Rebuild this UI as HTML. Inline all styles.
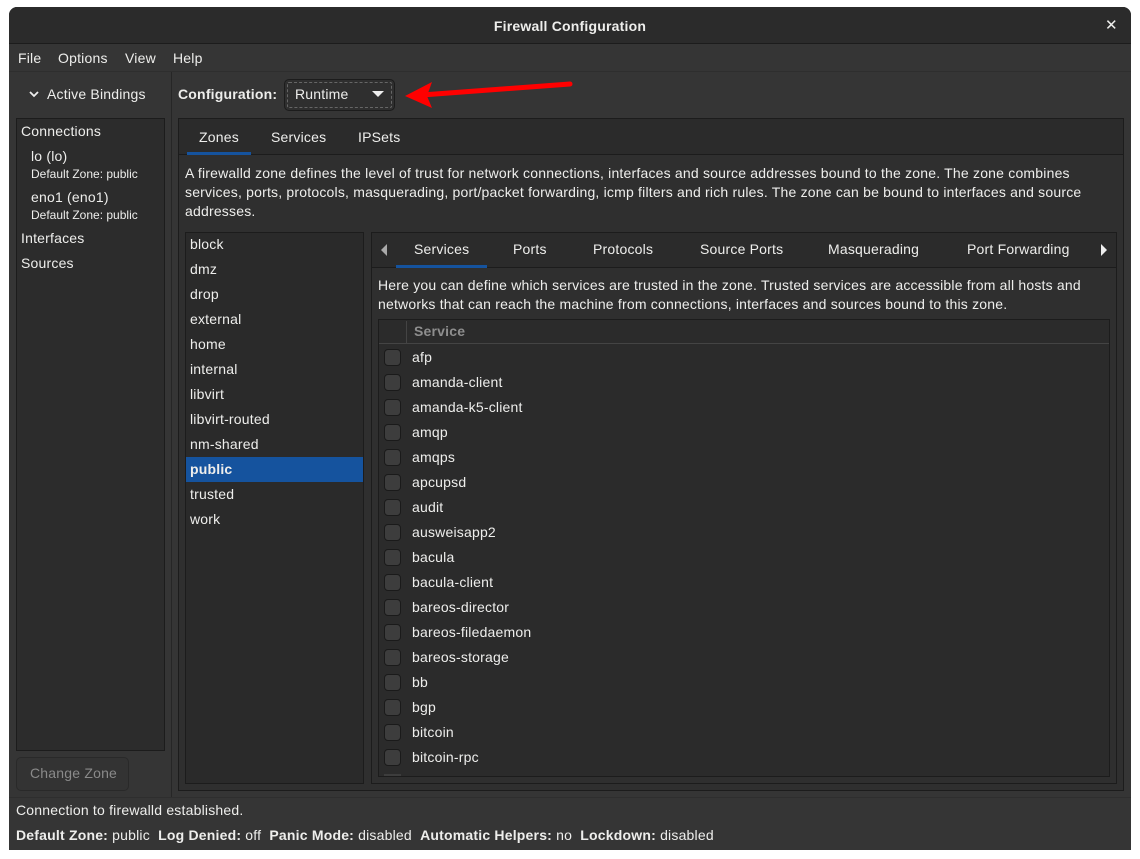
<!DOCTYPE html>
<html><head><meta charset="utf-8"><style>
*{margin:0;padding:0;box-sizing:border-box}
body{width:1140px;height:859px;background:#fff;position:relative;overflow:hidden;font-family:"Liberation Sans","DejaVu Sans",sans-serif;font-size:14px;color:#eeeeec;letter-spacing:0.2px}
.a{position:absolute;white-space:nowrap}
#win{position:absolute;left:9px;top:7px;width:1122px;height:843px;background:#353535;border-radius:8px 8px 0 0;overflow:hidden}
.box{position:absolute;border:1px solid #1c1c1c}
.cb{position:absolute;left:384px;width:17px;height:17px;border:1px solid #1a1a1a;border-radius:4px;background:#3d3d3d}
b{font-weight:bold}
</style></head><body>
<div id="win"></div>
<div class="a" style="left:9px;top:7px;width:1122px;height:37px;background:#2b2b2b;border-radius:8px 8px 0 0;border-bottom:1px solid #1c1c1c"></div>
<div class="a" style="left:9px;top:18px;width:1122px;text-align:center;font-weight:bold;font-size:14px">Firewall Configuration</div>
<div class="a" style="left:1105px;top:16px;font-size:15px;font-weight:bold">✕</div>
<div class="a" style="left:9px;top:71px;width:1122px;height:1px;background:#2e2e2e"></div>
<div class="a" style="left:18px;top:50px">File</div>
<div class="a" style="left:58px;top:50px">Options</div>
<div class="a" style="left:125px;top:50px">View</div>
<div class="a" style="left:173px;top:50px">Help</div>
<div class="a" style="left:171px;top:72px;width:1px;height:725px;background:#262626"></div>
<svg class="a" style="left:28px;top:89px" width="12" height="10"><path d="M2 3l4 4 4-4" stroke="#eee" stroke-width="1.8" fill="none"/></svg>
<div class="a" style="left:47px;top:86px">Active Bindings</div>
<div class="box" style="left:16px;top:118px;width:149px;height:633px;background:#2c2c2c"></div>
<div class="a" style="left:21px;top:123px">Connections</div>
<div class="a" style="left:31px;top:148px">lo (lo)</div>
<div class="a" style="left:31px;top:167px;font-size:12px;letter-spacing:0">Default Zone: public</div>
<div class="a" style="left:31px;top:189px">eno1 (eno1)</div>
<div class="a" style="left:31px;top:208px;font-size:12px;letter-spacing:0">Default Zone: public</div>
<div class="a" style="left:21px;top:230px">Interfaces</div>
<div class="a" style="left:21px;top:255px">Sources</div>
<div class="a" style="left:16px;top:757px;width:113px;height:34px;border:1px solid #292929;border-radius:5px;background:#333"></div>
<div class="a" style="left:30px;top:765px;color:#8a8a8a">Change Zone</div>
<div class="a" style="left:178px;top:86px;font-weight:bold">Configuration:</div>
<div class="a" style="left:284px;top:79px;width:111px;height:32px;border:1px solid #1c1c1c;border-radius:5px;background:#2f2f2f;outline:1px dashed #666;outline-offset:-4px"></div>
<div class="a" style="left:295px;top:86px">Runtime</div>
<svg class="a" style="left:371px;top:90px" width="14" height="8"><path d="M1 1h12L7 7z" fill="#eee"/></svg>
<svg class="a" style="left:400px;top:78px" width="180" height="30"><path d="M170 6L22 17" stroke="#f00" stroke-width="5" stroke-linecap="round"/><path d="M5 18L32 4L27 18L32 30z" fill="#f00"/></svg>
<div class="box" style="left:178px;top:118px;width:946px;height:673px;background:#2f2f2f"></div>
<div class="a" style="left:179px;top:119px;width:944px;height:36px;background:#2b2b2b;border-bottom:1px solid #1c1c1c"></div>
<div class="a" style="left:199px;top:129px">Zones</div>
<div class="a" style="left:271px;top:129px">Services</div>
<div class="a" style="left:358px;top:129px">IPSets</div>
<div class="a" style="left:187px;top:152px;width:64px;height:3px;background:#15539e"></div>
<div class="a" style="left:185px;top:164px;line-height:19px;white-space:normal;width:900px">A firewalld zone defines the level of trust for network connections, interfaces and source addresses bound to the zone. The zone combines services, ports, protocols, masquerading, port/packet forwarding, icmp filters and rich rules. The zone can be bound to interfaces and source addresses.</div>
<div class="box" style="left:185px;top:232px;width:179px;height:552px;background:#2a2a2a"></div>
<div class="a" style="left:186px;top:457px;width:177px;height:25px;background:#15539e"></div>
<div class="a" style="left:190px;top:232px;line-height:25px">block<br>dmz<br>drop<br>external<br>home<br>internal<br>libvirt<br>libvirt-routed<br>nm-shared<br><b>public</b><br>trusted<br>work</div>
<div class="box" style="left:371px;top:232px;width:746px;height:552px;background:#2f2f2f"></div>
<div class="a" style="left:372px;top:233px;width:744px;height:35px;background:#2b2b2b;border-bottom:1px solid #1c1c1c"></div>
<svg class="a" style="left:380px;top:244px" width="8" height="12"><path d="M7 0v12L1 6z" fill="#aaa"/></svg>
<svg class="a" style="left:1100px;top:244px" width="8" height="12"><path d="M1 0v12l6-6z" fill="#eee"/></svg>
<div class="a" style="left:414px;top:241px">Services</div>
<div class="a" style="left:513px;top:241px">Ports</div>
<div class="a" style="left:593px;top:241px">Protocols</div>
<div class="a" style="left:700px;top:241px">Source Ports</div>
<div class="a" style="left:828px;top:241px">Masquerading</div>
<div class="a" style="left:967px;top:241px">Port Forwarding</div>
<div class="a" style="left:396px;top:265px;width:91px;height:3px;background:#15539e"></div>
<div class="a" style="left:378px;top:276px;line-height:19px">Here you can define which services are trusted in the zone. Trusted services are accessible from all hosts and<br>networks that can reach the machine from connections, interfaces and sources bound to this zone.</div>
<div class="box" style="left:378px;top:319px;width:732px;height:458px;background:#2b2b2b;overflow:hidden"></div>
<div class="a" style="left:379px;top:320px;width:730px;height:24px;border-bottom:1px solid #444"></div>
<div class="a" style="left:406px;top:321px;width:1px;height:23px;background:#444"></div>
<div class="a" style="left:414px;top:323px;color:#8e8e8e;font-weight:bold">Service</div>
<div class="a" style="left:412px;top:345px;line-height:25px">afp<br>amanda-client<br>amanda-k5-client<br>amqp<br>amqps<br>apcupsd<br>audit<br>ausweisapp2<br>bacula<br>bacula-client<br>bareos-director<br>bareos-filedaemon<br>bareos-storage<br>bb<br>bgp<br>bitcoin<br>bitcoin-rpc</div>
<div class="cb" style="top:349px"></div><div class="cb" style="top:374px"></div><div class="cb" style="top:399px"></div><div class="cb" style="top:424px"></div><div class="cb" style="top:449px"></div><div class="cb" style="top:474px"></div><div class="cb" style="top:499px"></div><div class="cb" style="top:524px"></div><div class="cb" style="top:549px"></div><div class="cb" style="top:574px"></div><div class="cb" style="top:599px"></div><div class="cb" style="top:624px"></div><div class="cb" style="top:649px"></div><div class="cb" style="top:674px"></div><div class="cb" style="top:699px"></div><div class="cb" style="top:724px"></div><div class="cb" style="top:749px"></div>
<div class="a" style="left:384px;top:774px;width:17px;height:2px;background:#3d3d3d"></div>
<div class="a" style="left:9px;top:797px;width:1122px;height:1px;background:#2e2e2e"></div>
<div class="a" style="left:16px;top:802px">Connection to firewalld established.</div>
<div class="a" style="left:16px;top:827px"><b>Default Zone:</b> public &nbsp;<b>Log Denied:</b> off &nbsp;<b>Panic Mode:</b> disabled &nbsp;<b>Automatic Helpers:</b> no &nbsp;<b>Lockdown:</b> disabled</div>
</body></html>
